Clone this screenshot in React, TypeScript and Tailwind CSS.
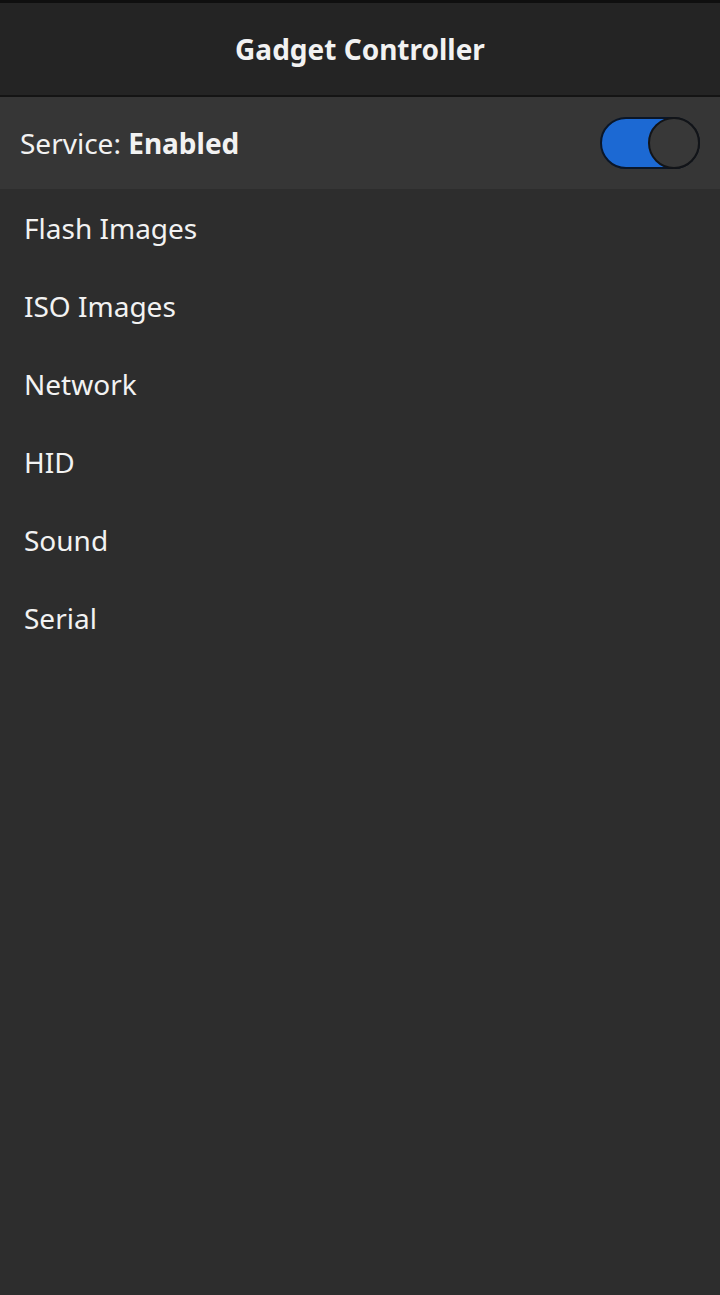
import React from 'react'

const items = ['Flash Images', 'ISO Images', 'Network', 'HID', 'Sound', 'Serial']

function Toggle() {
    return (
        <div className="relative h-[52px] w-[100px] rounded-full border-2 border-[#0a1628] bg-[#1c69d3]">
            <div className="absolute right-[-2px] top-[-2px] h-[52px] w-[52px] rounded-full border-2 border-[#121418] bg-[#383838]" />
        </div>
    )
}

function App() {
    return (
        <div
            className="flex min-h-[1295px] w-full flex-col bg-[#2d2d2d] text-[#f2f2f2]"
            style={{ fontFamily: '"Noto Sans", "Open Sans", sans-serif' }}
        >
            <div className="flex h-[97px] items-center justify-center border-t-[3px] border-b-2 border-t-[#0f0f0f] border-b-[#141414] bg-[#242424]">
                <h1 className="text-[28px] font-bold">Gadget Controller</h1>
            </div>
            <div className="flex h-[92px] items-center justify-between bg-[#363636] pl-5 pr-5">
                <p className="text-[28px]">
                    Service: <span className="font-bold">Enabled</span>
                </p>
                <Toggle />
            </div>
            <ul className="flex flex-col">
                {items.map((item) => (
                    <li key={item} className="flex h-[78px] items-center px-6 text-[28px]">
                        {item}
                    </li>
                ))}
            </ul>
        </div>
    )
}

export default App
